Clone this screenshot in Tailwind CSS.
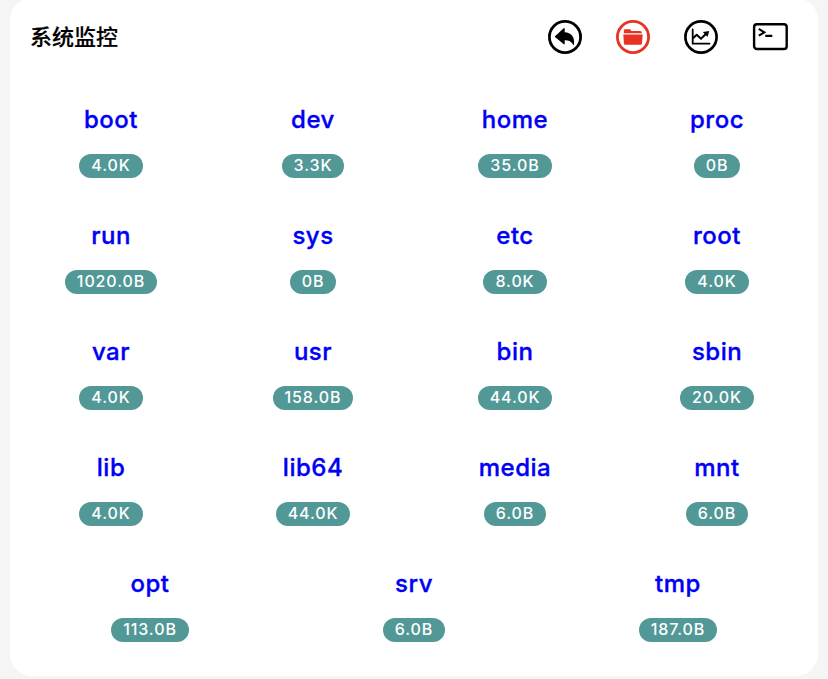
<!DOCTYPE html>
<html lang="zh">
<head>
<meta charset="utf-8">
<title>系统监控</title>
<script src="https://cdn.jsdelivr.net/npm/@tailwindcss/browser@4"></script>
</head>
<body class="bg-[#f5f5f5] h-[679px] overflow-hidden px-2.5 font-['Inter','Noto_Sans_CJK_SC',sans-serif]">
<main class="bg-white h-[678px] -mt-0.5 rounded-[22px]">
  <header class="flex items-center justify-between h-[78px] pl-5 pr-[30px]">
    <h1 class="text-[22px] leading-8 pb-[5px] font-medium text-black font-['Noto_Sans_CJK_SC',sans-serif] [-webkit-text-stroke:0.2px_black]">系统监控</h1>
    <nav class="flex items-center gap-[34px]">
      <svg class="w-[34px] h-[34px]" viewBox="0 0 34 34" fill="none"><circle cx="17" cy="17" r="15.6" stroke="#000" stroke-width="2.8"/><path d="M7 16.3 15.7 8.2Q16.7 7.5 16.7 9V12.2C23 12.4 27 16.5 26 24.6Q25.8 25.8 25 24.5C23 21.2 20.5 20.3 16.7 20.3V23.4Q16.7 25 15.5 24L7 16.9Q6.6 16.6 7 16.3Z" fill="#000"/></svg>
      <svg class="w-[34px] h-[34px]" viewBox="0 0 34 34" fill="none"><circle cx="17" cy="17" r="15.6" stroke="#e83323" stroke-width="2.8"/><path d="M7.8 13.2V10.5Q7.8 9.2 9.1 9.2H13.5Q14.5 9.2 14.9 10.1L15.3 10.9H24Q26 10.9 26 13.2Z" fill="#e83323"/><path d="M7.3 14.4H26.7L26 23.3Q25.9 24.8 24.5 24.8H9.4Q8 24.8 7.9 23.3Z" fill="#e83323"/></svg>
      <svg class="w-[34px] h-[34px]" viewBox="0 0 34 34" fill="none" stroke="#000"><circle cx="17" cy="17" r="15.6" stroke-width="2.7"/><path d="M8.7 9.5V23.6H25.5" stroke-width="1.8" stroke-linecap="round"/><path d="M9 18.3 12.7 14.7 17 18.7 22.3 13.5" stroke-width="2" stroke-linejoin="round"/><path d="M18.8 12.1 25.2 10.9 23.5 17Z" fill="#000" stroke="none"/></svg>
      <svg class="w-[36px] h-[34px]" viewBox="0 0 36 34" fill="none" stroke="#000"><rect x="2.1" y="4.2" width="32.6" height="24.8" rx="2.8" stroke-width="2.4"/><path d="M6.8 8.9 12.3 12.3 6.8 15.7M13.3 15.9H20.3" stroke-width="2.1"/></svg>
    </nav>
  </header>
  <section id="grid" class="grid grid-cols-4 pt-5"></section>
  <section id="tail" class="grid grid-cols-3 px-2"></section>
</main>
<script>
const dirs = [['boot','4.0K'],['dev','3.3K'],['home','35.0B'],['proc','0B'],['run','1020.0B'],['sys','0B'],['etc','8.0K'],['root','4.0K'],['var','4.0K'],['usr','158.0B'],['bin','44.0K'],['sbin','20.0K'],['lib','4.0K'],['lib64','44.0K'],['media','6.0B'],['mnt','6.0B'],['opt','113.0B'],['srv','6.0B'],['tmp','187.0B']];
const item = ([name, size]) => `<div class="flex flex-col items-center h-[116px] pt-2"><a class="text-[24px] leading-8 font-medium tracking-[0.5px] text-[#0000f5] [-webkit-text-stroke:0.35px_#0000f5]">${name}</a><span class="mt-[18px] h-6 rounded-full bg-[#529897] px-3 text-[16px] leading-[23px] font-medium tracking-[0.9px] text-white">${size}</span></div>`;
document.getElementById('grid').innerHTML = dirs.slice(0, 16).map(item).join('');
document.getElementById('tail').innerHTML = dirs.slice(16).map(item).join('');
</script>
</body>
</html>
